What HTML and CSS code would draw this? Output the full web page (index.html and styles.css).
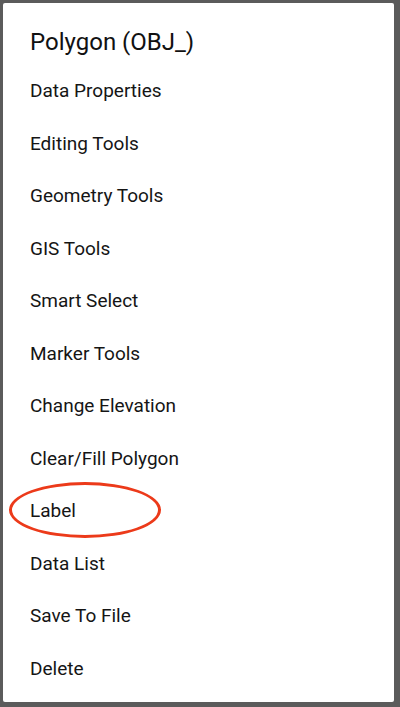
FILE: index.html
```html
<!DOCTYPE html>
<html lang="en">
<head>
    <meta charset="UTF-8">
    <meta name="viewport" content="width=device-width, initial-scale=1.0">
    <title>Polygon (OBJ_)</title>
    <link rel="stylesheet" href="styles.css">
</head>
<body>

    <div class="dialog">
        <h2 class="dialog-title">Polygon (OBJ_)</h2>
        <ul class="menu">
            <li>Data Properties</li>
            <li>Editing Tools</li>
            <li>Geometry Tools</li>
            <li>GIS Tools</li>
            <li>Smart Select</li>
            <li>Marker Tools</li>
            <li>Change Elevation</li>
            <li>Clear/Fill Polygon</li>
            <li class="marked">Label<span class="circle"></span></li>
            <li>Data List</li>
            <li>Save To File</li>
            <li>Delete</li>
        </ul>
    </div>

</body>
</html>
```

FILE: styles.css
```css
body {
    font-family: 'Roboto', 'Liberation Sans', sans-serif;
    margin: 0;
    padding: 3px 6px 5px 3px;
    background-color: #5b5b5b;
    height: 707px;
    box-sizing: border-box;
}

.dialog {
    background-color: #fff;
    border-radius: 2px;
    height: 699px;
    overflow: hidden;
}

.dialog-title {
    margin: 0;
    padding: 24px 0 8px 27px;
    font-size: 24px;
    font-weight: 400;
    line-height: 30px;
    color: #111;
}

.menu {
    list-style: none;
    margin: 0;
    padding: 0;
}

.menu li {
    position: relative;
    height: 52.5px;
    line-height: 52.5px;
    padding-left: 27px;
    font-size: 19px;
    color: #151515;
}

.circle {
    position: absolute;
    left: 6px;
    top: -3px;
    width: 146px;
    height: 50px;
    border: 3.5px solid #ec3a1a;
    border-radius: 50%;
}
```
